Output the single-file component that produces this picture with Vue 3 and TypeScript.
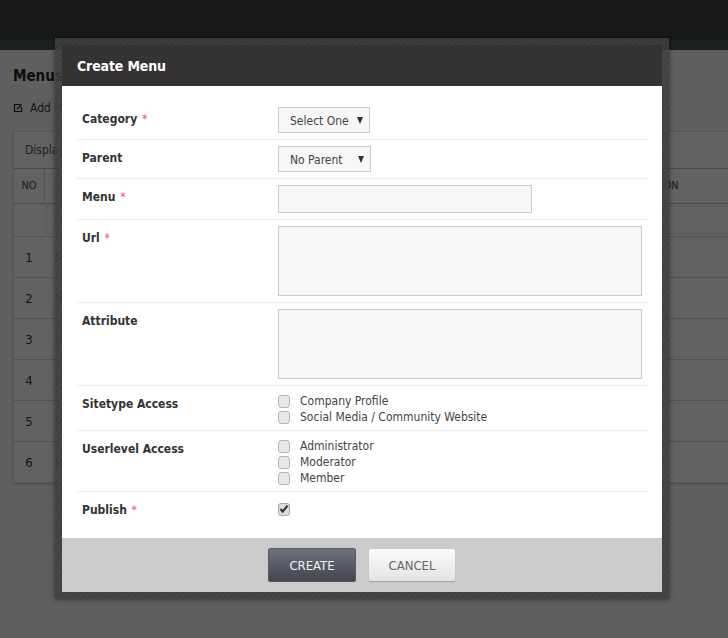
<script setup lang="ts">
import { ref } from 'vue'

const rows = [1, 2, 3, 4, 5, 6]
const sitetypes = ref([
  { label: 'Company Profile', on: false },
  { label: 'Social Media / Community Website', on: false },
])
const levels = ref([
  { label: 'Administrator', on: false },
  { label: 'Moderator', on: false },
  { label: 'Member', on: false },
])
const publish = ref(true)
</script>

<template>
  <div class="page">
    <div class="topbar"></div>
    <div class="subbar"></div>
    <div class="content">
      <h2 class="title">Menus</h2>
      <div class="add">
        <svg width="10" height="10" viewBox="0 0 10 10" class="add-icon">
          <path d="M7 1.5H1.5v7h7V4" fill="none" stroke="#222" stroke-width="1.2" />
          <path d="M4 6l4.5-4.5" fill="none" stroke="#222" stroke-width="1.4" />
        </svg>
        <span>Add Menu</span>
      </div>
      <div class="panel">
        <div class="display">Display</div>
        <div class="thead">
          <div class="no">NO</div>
          <div class="name"></div>
          <div class="action">ACTION</div>
        </div>
        <div class="search"><div class="search-box"></div></div>
        <div v-for="r in rows" :key="r" class="row">
          <div class="no num">{{ r }}</div>
          <div class="name">Menu</div>
        </div>
      </div>
    </div>

    <div class="overlay"></div>

    <div class="modal">
      <div class="modal-inner">
        <div class="modal-head">Create Menu</div>
        <div class="modal-body">
          <div class="field f-select">
            <label>Category <em>*</em></label>
            <div class="select s1">Select One<i></i></div>
          </div>
          <div class="field f-select">
            <label>Parent</label>
            <div class="select s2">No Parent<i></i></div>
          </div>
          <div class="field f-input">
            <label>Menu <em>*</em></label>
            <div class="input"></div>
          </div>
          <div class="field f-area">
            <label>Url <em>*</em></label>
            <div class="textarea"></div>
          </div>
          <div class="field f-area">
            <label>Attribute</label>
            <div class="textarea"></div>
          </div>
          <div class="field f-check">
            <label>Sitetype Access</label>
            <div class="checks">
              <div v-for="s in sitetypes" :key="s.label" class="check"><span class="box"></span>{{ s.label }}</div>
            </div>
          </div>
          <div class="field f-check">
            <label>Userlevel Access</label>
            <div class="checks">
              <div v-for="l in levels" :key="l.label" class="check"><span class="box"></span>{{ l.label }}</div>
            </div>
          </div>
          <div class="field f-last">
            <label>Publish <em>*</em></label>
            <div class="checks">
              <div class="check">
                <span class="box checked">
                  <svg v-if="publish" width="10" height="10" viewBox="0 0 10 10">
                    <path d="M1.5 5l2.2 2.6L8.5 1.6" fill="none" stroke="#333" stroke-width="2.2" />
                  </svg>
                </span>
              </div>
            </div>
          </div>
        </div>
        <div class="modal-foot">
          <button class="btn create">CREATE</button>
          <button class="btn cancel">CANCEL</button>
        </div>
      </div>
    </div>
  </div>
</template>

<style>
html, body { margin: 0; background: #5e5e5e; }
</style>

<style scoped>
.page {
  position: relative;
  width: 728px;
  height: 638px;
  overflow: hidden;
  background: #eee;
  font-family: "DejaVu Sans Condensed", "DejaVu Sans", sans-serif;
  font-size: 12px;
  color: #333;
}
.topbar { height: 40px; background: #3a3e42; }
.subbar { height: 10px; background: #445050; }
.content { padding: 16px 0 0 13px; }
.title { margin: 0; font-size: 15px; line-height: 20px; font-weight: 700; color: #222; }
.add { display: flex; align-items: center; gap: 7px; margin-top: 14px; height: 16px; }
.add-icon { flex: none; }
.panel {
  margin-top: 15px;
  width: 730px;
  background: #f4f4f4;
  border: 1px solid #d8d8d8;
  box-sizing: border-box;
  box-shadow: 0 1px 2px rgba(0,0,0,.2);
}
.display { height: 36px; line-height: 36px; padding-left: 11px; color: #555; }
.thead { display: flex; height: 36px; line-height: 34px; border-top: 1px solid #bbb; border-bottom: 1px solid #bbb; color: #444; font-size: 11px; box-sizing: border-box; }
.no { width: 30px; text-align: center; border-right: 1px solid #ccc; flex: none; }
.action { margin-left: 596px; }
.search { height: 32px; padding: 2px 0 0 32px; box-sizing: border-box; }
.search-box { height: 28px; border: 1px dotted #ccc; box-sizing: border-box; }
.row { display: flex; height: 41px; line-height: 42px; border-top: 1px solid #ccc; box-sizing: border-box; }
.row .no { border-right: none; font-size: 13px; }
.row .name { padding-left: 11px; color: #666; }
.overlay { position: absolute; inset: 0; background: rgba(0,0,0,.6); }

.modal {
  position: absolute;
  left: 55px;
  top: 38px;
  width: 600px;
  padding: 7px;
  background: repeating-linear-gradient(135deg, rgba(66,66,66,.85) 0 2px, rgba(60,60,60,.85) 2px 4px);
  box-shadow: 0 0 5px rgba(0,0,0,.5);
}
.modal-head {
  height: 41px;
  line-height: 43px;
  padding-left: 15px;
  background: #333;
  color: #fff;
  font-size: 14px;
  font-weight: 700;
  letter-spacing: -0.15px;
}
.modal-body { background: #fff; padding: 15px 15px 0; height: 452px; box-sizing: border-box; }
.field {
  display: flex;
  border-bottom: 1px dotted #ddd;
  box-sizing: border-box;
}
.field label { width: 201px; padding-left: 5px; box-sizing: border-box; font-weight: 700; color: #333; font-size: 12px; flex: none; line-height: 16px; padding-top: 4px; }
.field em { color: #f4557c; font-style: normal; font-weight: 400; margin-left: 1px; }
.f-select { height: 39px; padding-top: 6px; }
.f-input { height: 41px; padding-top: 6px; }
.f-area { height: 83px; padding-top: 6px; }
.f-check { padding-top: 7px; }
.f-check label { padding-top: 3px; }
.f-last { border-bottom: none; padding-top: 9px; }
.f-last label { padding-top: 1px; }
.select {
  position: relative;
  height: 26px;
  line-height: 26px;
  border: 1px solid #ccc;
  background: #f7f7f7;
  box-sizing: border-box;
  padding-left: 11px;
  color: #444;
}
.s1 { width: 92px; }
.s2 { width: 93px; }
.select i {
  position: absolute;
  right: 6px;
  top: 9px;
  border-left: 3.5px solid transparent;
  border-right: 3.5px solid transparent;
  border-top: 7px solid #333;
}
.input { width: 254px; height: 28px; border: 1px solid #ccc; background: #f7f7f7; box-sizing: border-box; }
.textarea { width: 364px; height: 70px; border: 1px solid #ccc; background: #f7f7f7; box-sizing: border-box; }
.checks { display: flex; flex-direction: column; padding-bottom: 5px; }
.check { display: flex; align-items: center; height: 16px; color: #444; }
.box {
  display: flex;
  align-items: center;
  justify-content: center;
  width: 12px;
  height: 13px;
  margin-right: 10px;
  border: 1px solid #b4b4b4;
  border-radius: 3px;
  background: #e8e8e8;
  box-sizing: border-box;
  flex: none;
}
.checked { background: #ddd; border-color: #aaa; }
.modal-foot {
  height: 54px;
  background: #cbcbcb;
  display: flex;
  justify-content: center;
  align-items: center;
  gap: 13px;
  padding-right: 1px;
  box-sizing: border-box;
}
.btn {
  font-family: inherit;
  font-size: 13px;
  height: 34px;
  border-radius: 2px;
  cursor: pointer;
  padding: 1px 0 0;
}
.create {
  width: 88px;
  color: #f0f0f0;
  border: 1px solid #555a66;
  background: linear-gradient(#6d717c, #434651);
}
.cancel {
  width: 86px;
  height: 32px;
  color: #666;
  border: none;
  background: linear-gradient(#fafafa, #e4e4e4);
  box-shadow: 0 1px 1px rgba(0,0,0,.2);
}
</style>
